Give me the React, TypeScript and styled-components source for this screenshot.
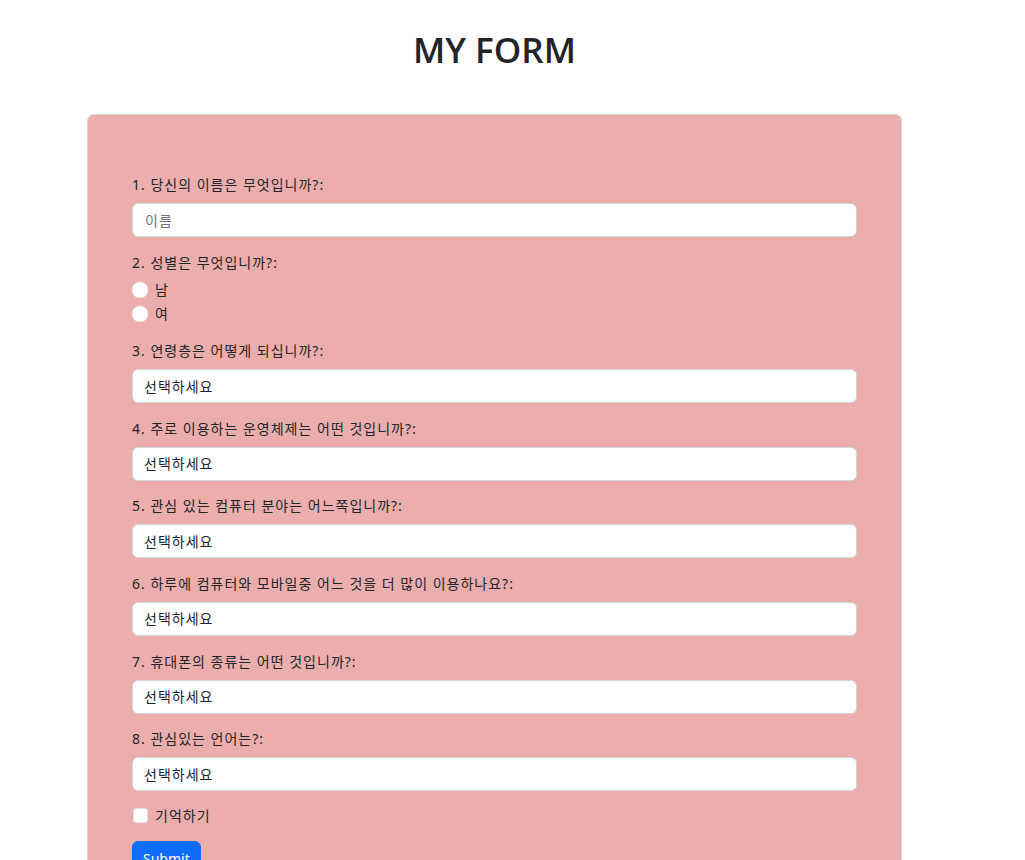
import React from "react";
import styled, { createGlobalStyle } from "styled-components";

const Global = createGlobalStyle`
  html, body { margin: 0; padding: 0; background: #fff; }
  body {
    font-family: "Noto Sans", "Noto Sans CJK KR", sans-serif;
    font-size: 14px;
    line-height: 1.5;
    color: #212529;
  }
  * { box-sizing: border-box; }
`;

const Page = styled.div`
  width: 815px;
  margin-left: 87px;
`;

const Title = styled.h1`
  margin: 28px 0 43px;
  text-align: center;
  font-family: "Open Sans", "Noto Sans CJK KR", sans-serif;
  font-weight: 600;
  font-size: 35px;
  line-height: 43px;
  color: #212529;
`;

const Card = styled.form`
  background: #ecadad;
  border: 1px solid #d9d2d2;
  border-radius: 7px;
  padding: 59px 44px 30px;
  letter-spacing: 1px;
`;

const Group = styled.div`
  margin-bottom: 14.6px;
`;

const Label = styled.label<{ $tight?: boolean }>`
  display: block;
  line-height: 21px;
  margin-bottom: ${(p) => (p.$tight ? "5px" : "8px")};
`;

const TextInput = styled.input`
  display: block;
  width: 100%;
  height: 34px;
  padding: 0 12px;
  font: inherit;
  letter-spacing: 1px;
  color: #212529;
  background: #fff;
  border: 1px solid #ced4da;
  border-radius: 6px;
  &::placeholder { color: #6c757d; }
`;

const Select = styled.select`
  display: block;
  width: 100%;
  height: 34px;
  padding: 0 11px;
  font: inherit;
  letter-spacing: 1px;
  color: #212529;
  background: #fff;
  border: 1px solid #ced4da;
  border-radius: 6px;
  appearance: none;
  -webkit-appearance: none;
`;

const CheckRow = styled.label`
  display: flex;
  align-items: center;
  gap: 7px;
  height: 24px;
`;

const Radio = styled.span`
  width: 16px;
  height: 16px;
  border-radius: 50%;
  background: #fff;
  flex: none;
`;

const Box = styled.span`
  width: 15px;
  height: 15px;
  margin-left: 1px;
  border-radius: 3px;
  background: #fff;
  border: 1px solid #e2dede;
  flex: none;
`;

const CheckGroup = styled.div`
  margin-bottom: 15px;
  height: 20px;
  display: flex;
  align-items: center;
`;

const Button = styled.button`
  display: inline-block;
  height: 35px;
  padding: 0 10px;
  font-family: "Noto Sans", sans-serif;
  font-size: 14px;
  letter-spacing: 0;
  color: #fff;
  background: #0d6efd;
  border: 1px solid #0d6efd;
  border-radius: 6px;
`;

const questions = [
  "3. 연령층은 어떻게 되십니까?:",
  "4. 주로 이용하는 운영체제는 어떤 것입니까?:",
  "5. 관심 있는 컴퓨터 분야는 어느쪽입니까?:",
  "6. 하루에 컴퓨터와 모바일중 어느 것을 더 많이 이용하나요?:",
  "7. 휴대폰의 종류는 어떤 것입니까?:",
  "8. 관심있는 언어는?:",
];

export default function App() {
  return (
    <>
      <Global />
      <Page>
        <Title>MY FORM</Title>
        <Card onSubmit={(e) => e.preventDefault()}>
          <Group>
            <Label>1. 당신의 이름은 무엇입니까?:</Label>
            <TextInput placeholder="이름" />
          </Group>
          <Group>
            <Label $tight>2. 성별은 무엇입니까?:</Label>
            <CheckRow>
              <Radio />
              남
            </CheckRow>
            <CheckRow>
              <Radio />
              여
            </CheckRow>
          </Group>
          {questions.map((q) => (
            <Group key={q}>
              <Label>{q}</Label>
              <Select defaultValue="">
                <option value="">선택하세요</option>
              </Select>
            </Group>
          ))}
          <CheckGroup>
            <CheckRow>
              <Box />
              기억하기
            </CheckRow>
          </CheckGroup>
          <Button type="submit">Submit</Button>
        </Card>
      </Page>
    </>
  );
}
